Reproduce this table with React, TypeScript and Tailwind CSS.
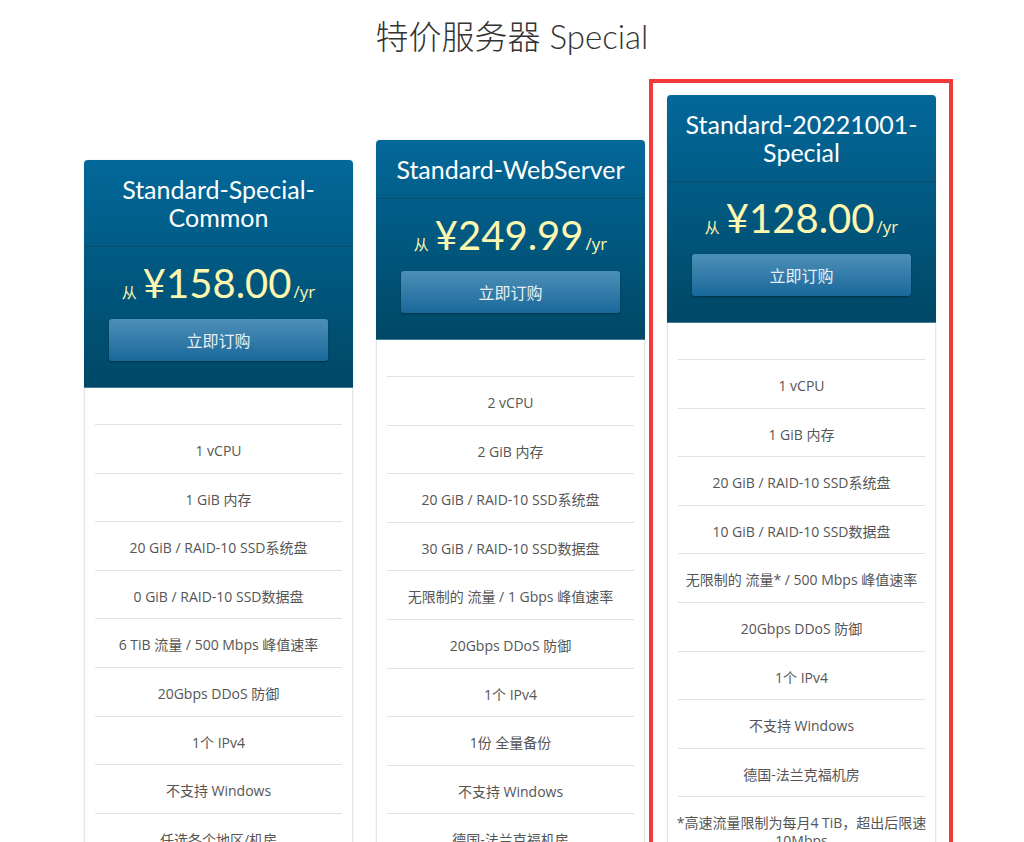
import React from "react";

interface Plan {
  title: string[];
  price: string;
  features: string[];
}

const plans: Plan[] = [
  {
    title: ["Standard-Special-", "Common"],
    price: "158.00",
    features: [
      "1 vCPU",
      "1 GiB 内存",
      "20 GiB / RAID-10 SSD系统盘",
      "0 GiB / RAID-10 SSD数据盘",
      "6 TiB 流量 / 500 Mbps 峰值速率",
      "20Gbps DDoS 防御",
      "1个 IPv4",
      "不支持 Windows",
      "任选各个地区/机房",
    ],
  },
  {
    title: ["Standard-WebServer"],
    price: "249.99",
    features: [
      "2 vCPU",
      "2 GiB 内存",
      "20 GiB / RAID-10 SSD系统盘",
      "30 GiB / RAID-10 SSD数据盘",
      "无限制的 流量 / 1 Gbps 峰值速率",
      "20Gbps DDoS 防御",
      "1个 IPv4",
      "1份 全量备份",
      "不支持 Windows",
      "德国-法兰克福机房",
    ],
  },
  {
    title: ["Standard-20221001-", "Special"],
    price: "128.00",
    features: [
      "1 vCPU",
      "1 GiB 内存",
      "20 GiB / RAID-10 SSD系统盘",
      "10 GiB / RAID-10 SSD数据盘",
      "无限制的 流量* / 500 Mbps 峰值速率",
      "20Gbps DDoS 防御",
      "1个 IPv4",
      "不支持 Windows",
      "德国-法兰克福机房",
      "*高速流量限制为每月4 TiB，超出后限速\n10Mbps",
    ],
  },
];

export default function App() {
  return (
    <div className="h-[842px] w-[1024px] overflow-hidden bg-white">
      <h1 className="pt-[14px] text-center text-[33px] font-light leading-[44px] text-[#333] [font-family:Lato,'Noto_Sans_CJK_SC',sans-serif]">
        特价服务器 Special
      </h1>

      <div className="mt-[21px] flex items-start pl-[84px]">
        <div className="mt-[81px]">
          <PlanCard plan={plans[0]} />
        </div>
        <div className="ml-[23px] mt-[61px]">
          <PlanCard plan={plans[1]} />
        </div>
        <div className="ml-[4px] h-[800px] w-[304px] border-4 border-[#f33a3a] pl-[14px] pr-[13px] pt-[12px]">
          <PlanCard plan={plans[2]} />
        </div>
      </div>
    </div>
  );
}

function PlanCard({ plan }: { plan: Plan }) {
  return (
    <div className="w-[269px] rounded-t-[4px] shadow-[0_0_2px_rgba(0,0,0,0.12)]">
      <div className="rounded-t-[4px] bg-gradient-to-b from-[#03689a] to-[#004866] border-b border-[#3f819d]">
        <div className="border-b border-[#0b4c6a] px-2 py-[15px] text-center text-[25px] leading-[28px] text-white [font-family:Lato,sans-serif]">
          {plan.title.map((t) => (
            <div key={t}>{t}</div>
          ))}
        </div>

        <div className="px-[25px] pb-[26px] pt-[12px]">
          <div className="flex h-[48px] items-baseline justify-center text-[#fdf7b0] [font-family:Lato,sans-serif]">
            <span className="mr-[6px] text-[15px] [font-family:'Noto_Sans_CJK_SC',sans-serif]">从</span>
            <span className="text-[40px] leading-[48px]">¥{plan.price}</span>
            <span className="ml-[2px] text-[17px] [font-family:'Open_Sans',sans-serif]">/yr</span>
          </div>

          <button className="mt-[12px] h-[42px] w-full rounded-[3px] bg-gradient-to-b from-[#4c90b8] to-[#17689a] text-[16px] text-[#e8f0f5] shadow-[0_1px_2px_rgba(0,0,0,0.35)] [font-family:'Noto_Sans_CJK_SC',sans-serif]">
            立即订购
          </button>
        </div>
      </div>

      <div className="border-x border-[#e6e6e6] bg-white px-[10px] pb-4 pt-[36px]">
        {plan.features.map((f) => (
          <div
            key={f}
            className="min-h-[48.6px] whitespace-pre-line border-t border-[#e1e1e1] pb-[10.6px] pt-[17px] text-center text-[14px] leading-[18px] text-[#555] [font-family:'Open_Sans','Noto_Sans_CJK_SC',sans-serif]"
          >
            <span className="inline-block whitespace-pre -mx-2">{f}</span>
          </div>
        ))}
      </div>
    </div>
  );
}
